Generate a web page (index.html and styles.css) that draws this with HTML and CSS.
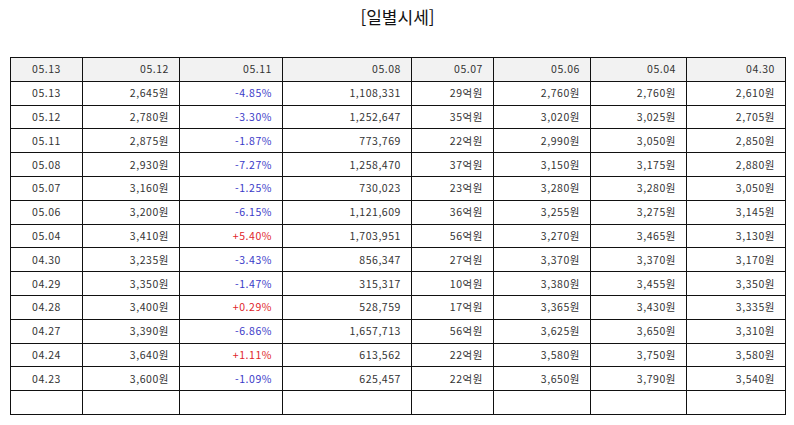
FILE: index.html
```html
<!DOCTYPE html>
<html lang="ko">
<head>
<meta charset="utf-8">
<link rel="stylesheet" href="styles.css">
</head>
<body>
<div class="page">
  <h1 class="title">[일별시세]</h1>
  <table class="quotes">
    <colgroup>
      <col class="c1"><col class="c2"><col class="c3"><col class="c4"><col class="c5"><col class="c6"><col class="c7"><col class="c8">
    </colgroup>
    <thead>
      <tr><th class="date">05.13</th><th>05.12</th><th>05.11</th><th>05.08</th><th>05.07</th><th>05.06</th><th>05.04</th><th>04.30</th></tr>
    </thead>
    <tbody>
      <tr><td class="date">05.13</td><td>2,645원</td><td class="down">-4.85%</td><td>1,108,331</td><td>29억원</td><td>2,760원</td><td>2,760원</td><td>2,610원</td></tr>
      <tr><td class="date">05.12</td><td>2,780원</td><td class="down">-3.30%</td><td>1,252,647</td><td>35억원</td><td>3,020원</td><td>3,025원</td><td>2,705원</td></tr>
      <tr><td class="date">05.11</td><td>2,875원</td><td class="down">-1.87%</td><td>773,769</td><td>22억원</td><td>2,990원</td><td>3,050원</td><td>2,850원</td></tr>
      <tr><td class="date">05.08</td><td>2,930원</td><td class="down">-7.27%</td><td>1,258,470</td><td>37억원</td><td>3,150원</td><td>3,175원</td><td>2,880원</td></tr>
      <tr><td class="date">05.07</td><td>3,160원</td><td class="down">-1.25%</td><td>730,023</td><td>23억원</td><td>3,280원</td><td>3,280원</td><td>3,050원</td></tr>
      <tr><td class="date">05.06</td><td>3,200원</td><td class="down">-6.15%</td><td>1,121,609</td><td>36억원</td><td>3,255원</td><td>3,275원</td><td>3,145원</td></tr>
      <tr><td class="date">05.04</td><td>3,410원</td><td class="up">+5.40%</td><td>1,703,951</td><td>56억원</td><td>3,270원</td><td>3,465원</td><td>3,130원</td></tr>
      <tr><td class="date">04.30</td><td>3,235원</td><td class="down">-3.43%</td><td>856,347</td><td>27억원</td><td>3,370원</td><td>3,370원</td><td>3,170원</td></tr>
      <tr><td class="date">04.29</td><td>3,350원</td><td class="down">-1.47%</td><td>315,317</td><td>10억원</td><td>3,380원</td><td>3,455원</td><td>3,350원</td></tr>
      <tr><td class="date">04.28</td><td>3,400원</td><td class="up">+0.29%</td><td>528,759</td><td>17억원</td><td>3,365원</td><td>3,430원</td><td>3,335원</td></tr>
      <tr><td class="date">04.27</td><td>3,390원</td><td class="down">-6.86%</td><td>1,657,713</td><td>56억원</td><td>3,625원</td><td>3,650원</td><td>3,310원</td></tr>
      <tr><td class="date">04.24</td><td>3,640원</td><td class="up">+1.11%</td><td>613,562</td><td>22억원</td><td>3,580원</td><td>3,750원</td><td>3,580원</td></tr>
      <tr><td class="date">04.23</td><td>3,600원</td><td class="down">-1.09%</td><td>625,457</td><td>22억원</td><td>3,650원</td><td>3,790원</td><td>3,540원</td></tr>
      <tr class="empty"><td></td><td></td><td></td><td></td><td></td><td></td><td></td><td></td></tr>
    </tbody>
  </table>
</div>
</body>
</html>
```

FILE: styles.css
```css
html, body {
  margin: 0;
  padding: 0;
  background: #ffffff;
}
body {
  font-family: "Noto Sans CJK KR", "Noto Sans", "DejaVu Sans", sans-serif;
  color: #333333;
}
.page {
  padding: 0 9px 0 10px;
}
.title {
  margin: 0;
  height: 57px;
  padding-top: 5px;
  box-sizing: border-box;
  text-align: center;
  font-size: 17px;
  font-weight: normal;
  line-height: 24px;
  color: #111111;
}
.quotes {
  width: 775px;
  border-collapse: collapse;
  table-layout: fixed;
  font-size: 10.5px;
}
.c1 { width: 72px; }
.c2 { width: 97px; }
.c3 { width: 103px; }
.c4 { width: 129px; }
.c5 { width: 82px; }
.c6 { width: 97px; }
.c7 { width: 96px; }
.c8 { width: 99px; }
.quotes th,
.quotes td {
  border: 1px solid #111111;
  height: 22.8px;
  padding: 0 10px 0 4px;
  text-align: right;
  font-weight: normal;
  line-height: 14px;
  letter-spacing: 0.55px;
  white-space: nowrap;
  color: #333333;
}
.quotes thead th {
  background: #f2f2f2;
}
.quotes .date {
  text-align: center;
  padding: 0;
}
.quotes td.down { color: #3a3ac8; }
.quotes td.up { color: #e0252b; }
```
